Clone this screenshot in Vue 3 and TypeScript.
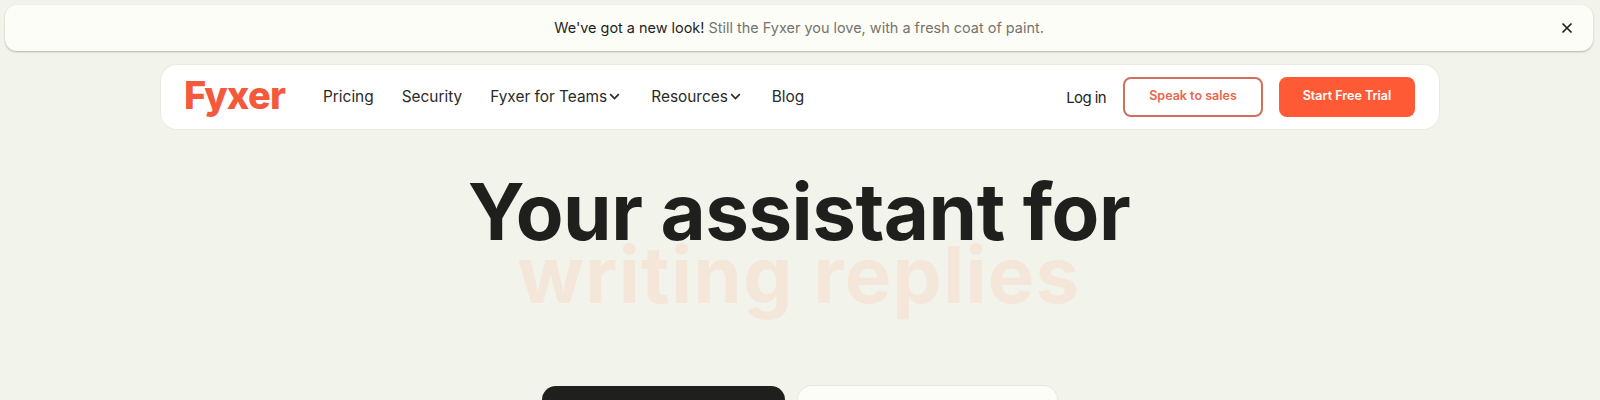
<template>
  <div class="page">
    <div class="banner">
      <p class="banner-text">
        <span class="banner-lead">We've got a new look!</span>
        Still the Fyxer you love, with a fresh coat of paint.
      </p>
      <button class="banner-close" aria-label="Close">
        <svg width="12" height="12" viewBox="0 0 12 12">
          <path d="M1.5 1.5l9 9M10.5 1.5l-9 9" stroke="#1f1f1d" stroke-width="1.7" fill="none" />
        </svg>
      </button>
    </div>

    <nav class="nav">
      <div class="logo">Fyxer</div>
      <ul class="links">
        <li v-for="link in links" :key="link.label" class="link" :class="{ 'link-menu': link.menu }">
          {{ link.label }}
          <svg v-if="link.menu" class="chevron" width="11" height="7" viewBox="0 0 11 7">
            <path d="M1.2 1.2L5.5 5.5l4.3-4.3" stroke="#2a2a28" stroke-width="1.7" fill="none" />
          </svg>
        </li>
      </ul>
      <div class="actions">
        <a class="login">Log in</a>
        <a class="btn btn-outline">Speak to sales</a>
        <a class="btn btn-solid">Start Free Trial</a>
      </div>
    </nav>

    <section class="hero">
      <h1 class="title">Your assistant for</h1>
      <div class="subtitle">writing replies</div>
      <div class="cta">
        <div class="cta-dark"></div>
        <div class="cta-light"></div>
      </div>
    </section>
  </div>
</template>

<script setup lang="ts">
interface NavLink {
  label: string;
  menu: boolean;
}

const links: NavLink[] = [
  { label: 'Pricing', menu: false },
  { label: 'Security', menu: false },
  { label: 'Fyxer for Teams', menu: true },
  { label: 'Resources', menu: true },
  { label: 'Blog', menu: false },
];
</script>

<style>
html,
body {
  margin: 0;
  background: #f2f3eb;
  overflow: hidden;
}
</style>

<style scoped>
.page {
  height: 400px;
  overflow: hidden;
  padding: 5px 7px 0 5px;
  box-sizing: border-box;
  font-family: Inter, 'Liberation Sans', sans-serif;
  color: #1f1f1d;
}

.banner {
  position: relative;
  display: flex;
  justify-content: center;
  align-items: center;
  height: 46px;
  background: #fdfdf7;
  border-radius: 12px;
  box-shadow: 0 1px 2px rgba(70, 70, 50, 0.35);
}

.banner-text {
  margin: 0;
  padding-bottom: 2px;
  font-size: 14.45px;
  color: #74746e;
}

.banner-lead {
  color: #1f1f1d;
}

.banner-close {
  position: absolute;
  right: 20px;
  top: 17px;
  padding: 0;
  border: none;
  background: none;
  display: flex;
}

.nav {
  display: flex;
  align-items: center;
  width: 1278px;
  height: 64px;
  margin: 14px 0 0 156px;
  padding: 0 24px;
  box-sizing: border-box;
  background: #fff;
  border-radius: 16px;
  box-shadow: 0 0 0 1px #ebebe3;
}

.logo {
  width: 104px;
  font-size: 38px;
  font-weight: 800;
  letter-spacing: -0.8px;
  color: #f4593b;
  margin-left: -1px;
  padding-bottom: 5px;
}

.links {
  display: flex;
  gap: 28px;
  margin: 0 0 0 35px;
  padding: 0 0 2px;
  list-style: none;
  font-size: 15.4px;
}

.link {
  display: flex;
  align-items: center;
  gap: 3px;
  color: #2a2a28;
}

.link-menu {
  gap: 2px;
  margin-right: 3px;
}

.actions {
  display: flex;
  align-items: center;
  margin-left: auto;
}

.login {
  margin-right: 17px;
  font-size: 15px;
  letter-spacing: -0.6px;
}

.btn {
  display: flex;
  justify-content: center;
  align-items: center;
  height: 40px;
  padding-bottom: 3px;
  box-sizing: border-box;
  border-radius: 8px;
  font-size: 12.5px;
  font-weight: 600;
}

.btn-outline {
  width: 140px;
  margin-right: 16px;
  border: 2px solid #cf6f5c;
  color: #e8664c;
}

.btn-solid {
  width: 136px;
  background: #ff5a36;
  color: #fff;
}

.hero {
  display: flex;
  flex-direction: column;
  align-items: center;
  margin-top: 39px;
}

.title {
  position: relative;
  z-index: 1;
  margin: 0;
  font-size: 78px;
  font-weight: 700;
  line-height: 88px;
  letter-spacing: -0.5px;
  white-space: nowrap;
}

.subtitle {
  margin-top: -25px;
  font-size: 78px;
  font-weight: 700;
  line-height: 88px;
  letter-spacing: 1.3px;
  color: #f5e6da;
}

.cta {
  display: flex;
  gap: 13px;
  margin-top: 67px;
}

.cta-dark {
  width: 243px;
  height: 60px;
  background: #1f1f1d;
  border-radius: 14px;
}

.cta-light {
  width: 259px;
  height: 60px;
  background: #fdfdf7;
  border-radius: 14px;
  box-shadow: 0 0 0 1px #e8e8e0;
}
</style>
